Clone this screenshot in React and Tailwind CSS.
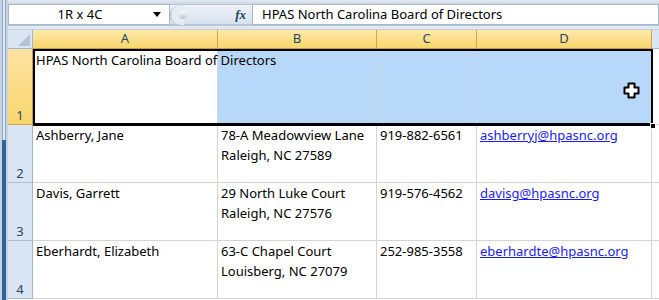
import React from 'react'

const font = { fontFamily: '"Noto Sans", "Open Sans", Arial, sans-serif' }

function PlusCursor() {
  return (
    <svg width="17" height="17" viewBox="0 0 17 17" aria-hidden="true">
      <path
        d="M5.5 1.5h6v4h4v6h-4v4h-6v-4h-4v-6h4z"
        fill="#fff"
        stroke="#000"
        strokeWidth="2"
        strokeLinejoin="round"
      />
    </svg>
  )
}

function ColHeader({ label, last = false }) {
  return (
    <div
      className={`flex items-center justify-center bg-gradient-to-b from-[#fde9a8] to-[#f8d66c] border-b border-[#c9984a] text-[13px] text-[#2a4468] ${
        last ? '' : 'border-r border-r-[#d7a14e]'
      }`}
    >
      {label}
    </div>
  )
}

function RowHeader({ n, selected = false }) {
  return (
    <div
      className={`flex items-end justify-center text-[13px] leading-[18px] text-[#2a4468] border-r border-b ${
        selected
          ? 'bg-gradient-to-b from-[#fde3a0] to-[#f8d66c] border-r-[#c9984a] border-b-[#d7a14e]'
          : 'bg-[#dbe6f4] border-r-[#9fb6cf] border-b-[#a9bdd4]'
      }`}
    >
      {n}
    </div>
  )
}

function Cell({ children, className = '' }) {
  return (
    <div className={`border-r border-b border-[#d4d4d4] bg-white pl-[3px] text-[13px] leading-[20px] text-black ${className}`}>
      {children}
    </div>
  )
}

function Mail({ children }) {
  return <span className="text-[#1a1aff] underline underline-offset-[1px]">{children}</span>
}

const people = [
  {
    n: 2,
    name: 'Ashberry, Jane',
    street: '78-A Meadowview Lane',
    city: 'Raleigh, NC 27589',
    phone: '919-882-6561',
    email: 'ashberryj@hpasnc.org',
  },
  {
    n: 3,
    name: 'Davis, Garrett',
    street: '29 North Luke Court',
    city: 'Raleigh, NC 27576',
    phone: '919-576-4562',
    email: 'davisg@hpasnc.org',
  },
  {
    n: 4,
    name: 'Eberhardt, Elizabeth',
    street: '63-C Chapel Court',
    city: 'Louisberg, NC 27079',
    phone: '252-985-3558',
    email: 'eberhardte@hpasnc.org',
  },
]

export default function App() {
  return (
    <div className="w-[659px] h-[300px] overflow-hidden flex bg-white" style={font}>
      {/* window edge */}
      <div className="w-[8px] flex flex-col bg-[#c5d3e4]">
        <div className="h-[140px] mx-[2px] border-x border-[#8ea7c6] bg-[#dfe8f3]" />
        <div className="flex-1 mx-[2px] bg-[#2f6299]" />
      </div>

      <div className="flex-1 flex flex-col">
        <div className="h-[4px] bg-gradient-to-b from-[#e4e9f0] to-[#cdd7e4]" />

        {/* formula bar */}
        <div className="h-[22px] flex bg-[#dfe7f1] border-b border-[#b7c5d8]">
          <div className="w-[162px] flex items-center bg-white border border-[#a5b7cf]">
            <span className="w-[142px] text-center text-[13px] text-black">1R x 4C</span>
            <svg width="8" height="5" viewBox="0 0 8 5" className="ml-[2px]" aria-hidden="true">
              <path d="M0 0h8L4 5z" fill="#000" />
            </svg>
          </div>
          <div className="w-[82px] flex items-center justify-between bg-gradient-to-b from-[#eef2f7] to-[#d7e1ee] border-y border-[#b7c5d8]">
            <div className="w-[14px] h-[20px] rounded-l-full border-l border-[#a9b9cd] bg-[#e6ecf4] flex items-center justify-end">
              <div className="w-[8px] h-[8px] rounded-full bg-gradient-to-b from-[#fefefe] to-[#b9c6d6] -mr-[3px]" />
            </div>
            <span className="mr-[6px] text-[13px] italic font-bold text-[#27405f]" style={{ fontFamily: '"Liberation Serif", serif' }}>
              fx
            </span>
          </div>
          <div className="flex-1 flex items-center bg-white border border-[#a5b7cf] pl-[9px] text-[13px] text-black">
            HPAS North Carolina Board of Directors
          </div>
        </div>

        <div className="h-[4px] bg-[#e3e9f1] border-b border-[#c3cfde]" />

        {/* sheet */}
        <div className="relative flex-1">
          <div className="grid grid-cols-[25px_185px_159px_100px_175px_1fr] grid-rows-[19px_76px_58px_58px_58px]">
            <div className="bg-[#dbe6f4] border-r border-b border-[#9fb6cf] flex items-end justify-end p-[2px]">
              <svg width="12" height="12" viewBox="0 0 12 12" aria-hidden="true">
                <path d="M12 0v12H0z" fill="#b3c4d8" />
              </svg>
            </div>
            <ColHeader label="A" />
            <ColHeader label="B" />
            <ColHeader label="C" />
            <ColHeader label="D" />
            <div className="bg-[#dbe6f4] border-b border-[#9fb6cf]" />

            <RowHeader n={1} selected />
            <Cell className="whitespace-nowrap overflow-visible relative z-10 bg-white pt-[1px]">
              HPAS North Carolina Board of Directors
            </Cell>
            <div className="bg-[#b8d8fa] border-b border-[#d4d4d4]" />
            <div className="bg-[#b8d8fa] border-l border-b border-[#cad6e3]" />
            <div className="bg-[#b8d8fa] border-l border-b border-[#cad6e3]" />
            <div className="bg-white border-l border-b border-[#d4d4d4]" />

            {people.map((p) => (
              <React.Fragment key={p.n}>
                <RowHeader n={p.n} />
                <Cell>{p.name}</Cell>
                <Cell>
                  <div>{p.street}</div>
                  <div>{p.city}</div>
                </Cell>
                <Cell>{p.phone}</Cell>
                <Cell>
                  <Mail>{p.email}</Mail>
                </Cell>
                <div className="bg-white border-b border-[#d4d4d4]" />
              </React.Fragment>
            ))}
          </div>

          {/* selection outline */}
          <div className="absolute left-[25px] top-[19px] w-[620px] h-[77px] border-2 border-b-[3px] border-black pointer-events-none z-20" />
          <div className="absolute left-[642px] top-[93px] w-[6px] h-[6px] bg-black border border-white z-30" />
          <div className="absolute left-[615px] top-[52px] z-30">
            <PlusCursor />
          </div>
        </div>
      </div>
    </div>
  )
}
